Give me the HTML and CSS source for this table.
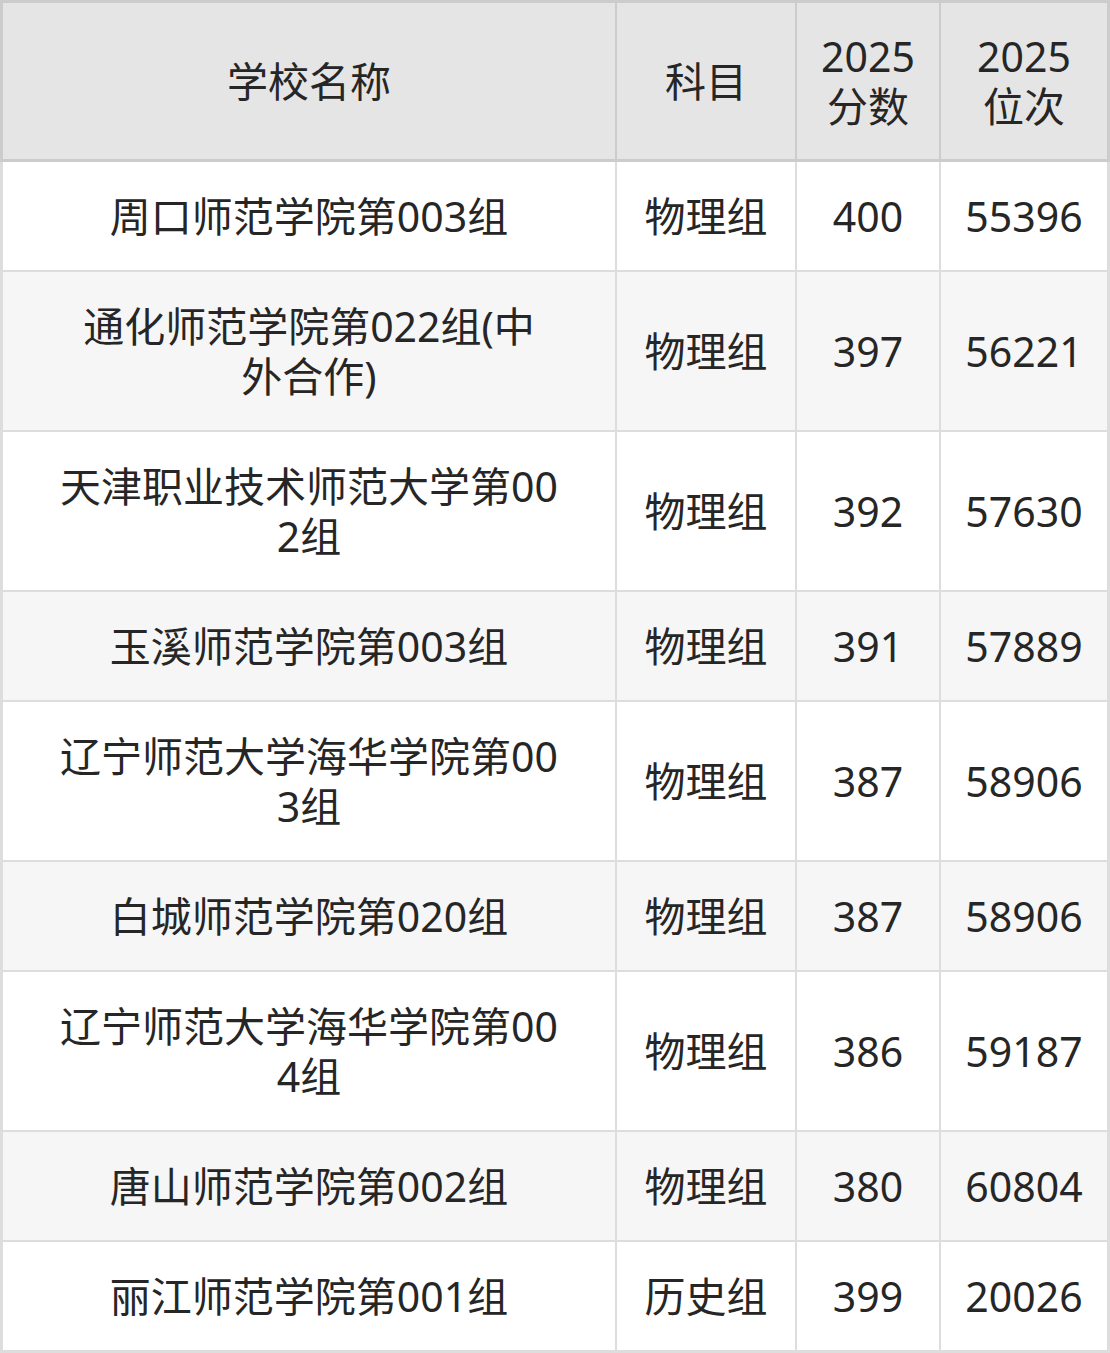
FILE: index.html
```html
<!DOCTYPE html>
<html lang="zh-CN">
<head>
<meta charset="utf-8">
<title>表格</title>
<link rel="stylesheet" href="styles.css">
</head>
<body>
<table class="score-table">
  <colgroup>
    <col class="c-name">
    <col class="c-subj">
    <col class="c-score">
    <col class="c-rank">
  </colgroup>
  <thead>
    <tr>
      <th>学校名称</th>
      <th>科目</th>
      <th>2025<br>分数</th>
      <th>2025<br>位次</th>
    </tr>
  </thead>
  <tbody>
    <tr><td>周口师范学院第003组</td><td>物理组</td><td>400</td><td>55396</td></tr>
    <tr><td>通化师范学院第022组(中<br>外合作)</td><td>物理组</td><td>397</td><td>56221</td></tr>
    <tr><td>天津职业技术师范大学第00<br>2组</td><td>物理组</td><td>392</td><td>57630</td></tr>
    <tr><td>玉溪师范学院第003组</td><td>物理组</td><td>391</td><td>57889</td></tr>
    <tr><td>辽宁师范大学海华学院第00<br>3组</td><td>物理组</td><td>387</td><td>58906</td></tr>
    <tr><td>白城师范学院第020组</td><td>物理组</td><td>387</td><td>58906</td></tr>
    <tr><td>辽宁师范大学海华学院第00<br>4组</td><td>物理组</td><td>386</td><td>59187</td></tr>
    <tr><td>唐山师范学院第002组</td><td>物理组</td><td>380</td><td>60804</td></tr>
    <tr class="last"><td>丽江师范学院第001组</td><td>历史组</td><td>399</td><td>20026</td></tr>
  </tbody>
</table>
</body>
</html>
```

FILE: styles.css
```css
html, body {
  margin: 0;
  padding: 0;
  background: #ffffff;
}

.score-table {
  width: 1110px;
  table-layout: fixed;
  border-collapse: separate;
  border-spacing: 0;
  font-family: "Noto Sans", "Noto Sans CJK SC", sans-serif;
  font-size: 41px;
  line-height: 50px;
  color: #262626;
}

.c-name { width: 617px; }
.c-subj { width: 180px; }
.c-score { width: 144px; }
.c-rank { width: 169px; }

.score-table th,
.score-table td {
  box-sizing: border-box;
  text-align: center;
  vertical-align: middle;
  padding: 29px 8px;
  border-right: 2px solid #dddddd;
  border-bottom: 2px solid #dddddd;
  font-weight: normal;
}

.score-table th {
  background: #e5e5e5;
  padding: 28px 8px;
  border-top: 3px solid #cccccc;
  border-right-color: #cccccc;
  border-bottom: 3px solid #cccccc;
}

.score-table th:first-child {
  border-left: 3px solid #cccccc;
}

.score-table td:first-child {
  border-left: 3px solid #dddddd;
}

.score-table th:last-child,
.score-table td:last-child {
  border-right-width: 3px;
}

.score-table tbody tr:nth-child(even) td {
  background: #f6f6f6;
}

.score-table tbody tr.last td {
  border-bottom-width: 3px;
}
```
